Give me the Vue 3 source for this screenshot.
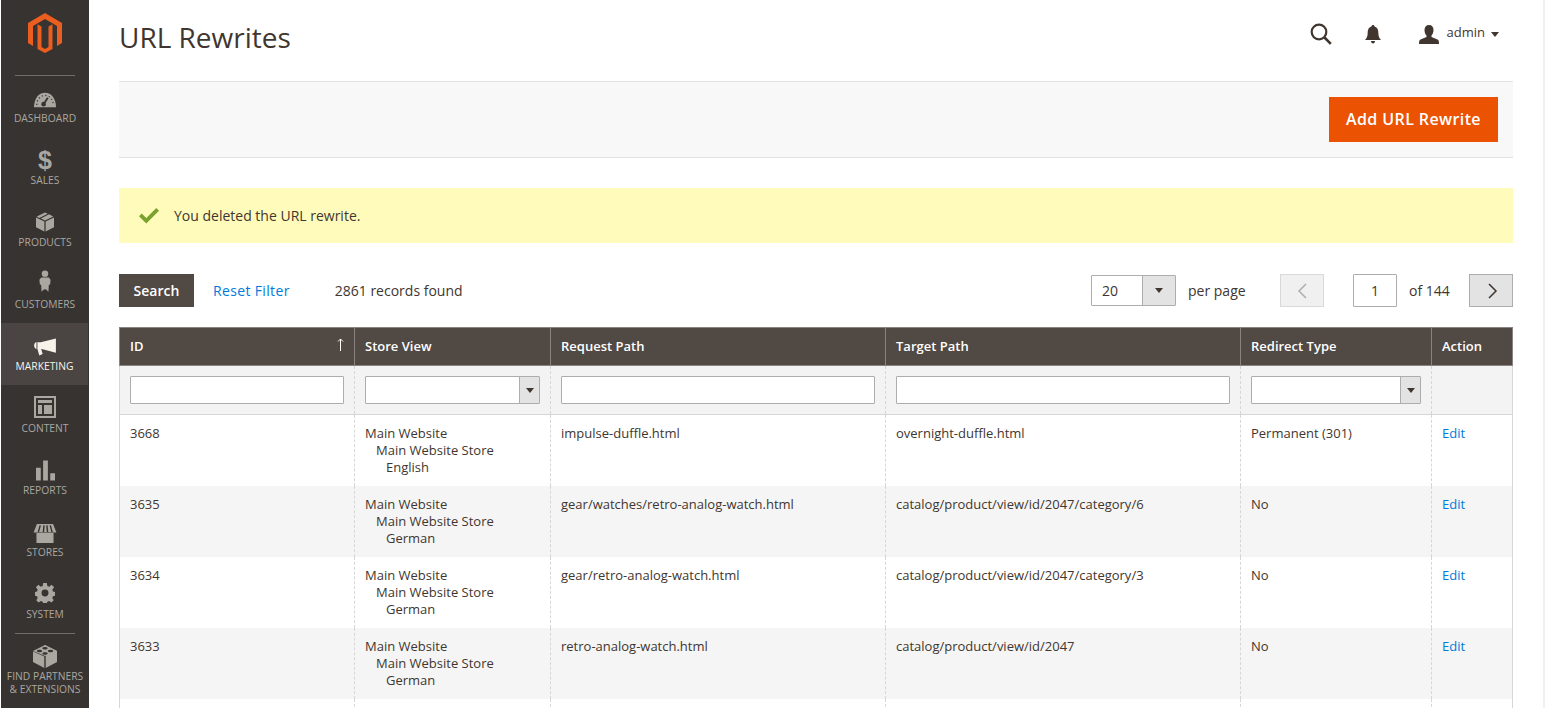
<script setup>
const navItems = [
  { key: 'dashboard', label: 'DASHBOARD' },
  { key: 'sales', label: 'SALES' },
  { key: 'products', label: 'PRODUCTS' },
  { key: 'customers', label: 'CUSTOMERS' },
  { key: 'marketing', label: 'MARKETING', active: true },
  { key: 'content', label: 'CONTENT' },
  { key: 'reports', label: 'REPORTS' },
  { key: 'stores', label: 'STORES' },
  { key: 'system', label: 'SYSTEM' },
];

const rows = [
  { id: 3668, store: 'English', request: 'impulse-duffle.html', target: 'overnight-duffle.html', type: 'Permanent (301)' },
  { id: 3635, store: 'German', request: 'gear/watches/retro-analog-watch.html', target: 'catalog/product/view/id/2047/category/6', type: 'No' },
  { id: 3634, store: 'German', request: 'gear/retro-analog-watch.html', target: 'catalog/product/view/id/2047/category/3', type: 'No' },
  { id: 3633, store: 'German', request: 'retro-analog-watch.html', target: 'catalog/product/view/id/2047', type: 'No' },
];
</script>

<template>
  <div class="page">
    <aside class="nav">
      <div class="logo">
        <svg width="36" height="40" viewBox="0 0 36 40">
          <path fill="#eb5e1f" d="M18 0 35 10v20l-5 3V13L18 6 6 13v20l-5-3V10z" />
          <path fill="#eb5e1f" d="M14.500 13.500v20.500l3.500 2 3.500-2V13.500l4-2.300V36l-7.500 4-7.500-4V11.200z" />
        </svg>
      </div>
      <ul class="nav-list">
        <li v-for="item in navItems" :key="item.key" class="nav-item" :class="[item.key, { active: item.active }]">
          <span class="nav-icon">
            <svg v-if="item.key === 'dashboard'" width="22" height="16" viewBox="0 0 24 17">
              <path fill="currentColor" d="M0 16.500C0 7 5 .5 12 .5S24 7 24 16.500z" />
              <path stroke="#373330" stroke-width="2" d="M10 14 15 6" />
              <circle cx="10.500" cy="13" r="2.500" fill="#373330" />
              <path stroke="#373330" stroke-width="1.300" stroke-dasharray="1.300 2.600" fill="none" d="M3 14C3 8 7 3.500 12 3.500S21 8 21 14" />
            </svg>
            <span v-else-if="item.key === 'sales'" class="dollar">$</span>
            <svg v-else-if="item.key === 'products'" width="18" height="20" viewBox="0 0 20 21">
              <path fill="currentColor" d="M0 5.500 9.300 10v11L0 16.300zM20 5.500 10.700 10v11l9.300-4.700zM10 0l3 1.400-9.200 4.700L.8 4.500zM14.500 2l4.700 2.500-9.200 4.400-4.600-2.200z" />
            </svg>
            <svg v-else-if="item.key === 'customers'" width="12" height="24" viewBox="0 0 14 25">
              <circle cx="7" cy="4" r="3.800" fill="currentColor" />
              <path fill="currentColor" d="M2.500 8.500h9L13.500 11 13 16.500l-1.500.5-.5 8-3-3-1 .5-1-.5-3 3-.5-8L1 16.500.5 11z" />
            </svg>
            <svg v-else-if="item.key === 'marketing'" width="22" height="18" viewBox="0 0 23 19">
              <path fill="currentColor" d="M23 .5V15.500L8 11.500H7.500L9 17l-3.500 1.500L3.500 11.500H2.500C1 11.500 0 10 0 8s1-3.500 2.500-3.500H7z" />
              <path stroke="#4a4542" stroke-width="1" d="M3 4.500v7" />
            </svg>
            <svg v-else-if="item.key === 'content'" width="22" height="22" viewBox="0 0 22 22">
              <path fill="currentColor" fill-rule="evenodd" d="M0 0h22v22H0zM2 2v18h18V2zM4 4h14v3H4zM4 9h4v9H4zM10 9h8v9h-8z" />
            </svg>
            <svg v-else-if="item.key === 'reports'" width="19" height="21" viewBox="0 0 20 21">
              <path fill="currentColor" d="M0 7.500h5V21H0zM7.500 0h5v21h-5zM15 13.500h5V21h-5z" />
            </svg>
            <svg v-else-if="item.key === 'stores'" width="24" height="19" viewBox="0 0 24 20">
              <path fill="currentColor" d="M3 9.500h18V20H3zM3.500 0h17l3.500 9H0z" />
              <path stroke="#373330" stroke-width="1.500" fill="none" d="M7 1.500 5 8.500M11 1.500 10.300 8.500M14 1.500l.7 7M17.500 1.500l2 7" />
            </svg>
            <svg v-else-if="item.key === 'system'" width="22" height="20" viewBox="0 0 22 22">
              <path fill="currentColor" fill-rule="evenodd" d="M9 0h4l.6 3.200 2 .8L18.300 2 21 4.800 19 7.400l.8 2 2.200.6v4l-2.200.6-.8 2 1.600 2.400L18 21.500l-2.400-1.600-2 .8L13 22H9l-.6-1.300-2-.8L4 21.500 1.400 19 3 16.600l-.8-2L0 14v-4l2.200-.6.8-2-2-2.600L3.700 2l2.700 2 2-.8zM11 7.200a3.800 3.800 0 1 0 0 7.600 3.800 3.800 0 0 0 0-7.600z" />
            </svg>
          </span>
          <span class="nav-label">{{ item.label }}</span>
        </li>
      </ul>
      <div class="nav-extra">
        <svg width="24" height="23" viewBox="0 0 24 23">
          <path fill="currentColor" d="M12 0 24 6v11l-11.300 6V11.500zM0 6.500l11.300 5V23L0 17z" />
          <path fill="currentColor" d="M12 0 24 6l-12 5L0 6z" />
          <ellipse cx="12" cy="3.300" rx="2.700" ry="1.300" fill="#373330" />
          <ellipse cx="6.500" cy="6" rx="2.700" ry="1.300" fill="#373330" />
          <ellipse cx="17.500" cy="6" rx="2.700" ry="1.300" fill="#373330" />
          <ellipse cx="12" cy="8.500" rx="2.700" ry="1.300" fill="#373330" />
        </svg>
        <span class="nav-label">FIND PARTNERS<br />&amp; EXTENSIONS</span>
      </div>
    </aside>

    <main class="main">
      <header class="top">
        <h1 class="title">URL Rewrites</h1>
        <div class="tools">
          <svg class="tool-search" width="22" height="22" viewBox="0 0 22 22">
            <circle cx="9" cy="9" r="7.300" fill="none" stroke="#41362f" stroke-width="2.200" />
            <path stroke="#41362f" stroke-width="2.600" d="m14.500 14.500 6.300 6.300" />
          </svg>
          <svg class="tool-bell" width="16" height="19" viewBox="0 0 16 19">
            <path fill="#41362f" d="M8 0c1 0 1.500.6 1.500 1.500C12 2.300 13.300 4.500 13.300 7c0 4 .7 5.800 2.700 8H0c2-2.200 2.700-4 2.700-8 0-2.500 1.300-4.700 3.800-5.500C6.500.6 7 0 8 0z" />
            <path fill="#41362f" d="M6 16h4c0 1.500-.8 2.500-2 2.500S6 17.500 6 16z" />
          </svg>
          <div class="user">
            <svg width="20" height="19" viewBox="0 0 20 19">
              <path fill="#41362f" d="M10 0c3 0 4.500 2 4.500 5 0 2.300-.8 4.300-2 5.500v1.500l6 2.500c1 .5 1.500 1.500 1.500 4.500H0c0-3 .5-4 1.500-4.500l6-2.500v-1.500C6.300 9.300 5.500 7.300 5.500 5c0-3 1.500-5 4.500-5z" />
            </svg>
            <span class="user-name">admin</span>
            <span class="caret"></span>
          </div>
        </div>
      </header>

      <div class="actions">
        <button class="primary">Add URL Rewrite</button>
      </div>

      <div class="message">
        <svg width="20" height="16" viewBox="0 0 20 16">
          <path fill="#79a22e" d="M0 8.300 2.700 5.600 7.300 10 17.300 0 20 2.700 7.300 15.500z" />
        </svg>
        <span>You deleted the URL rewrite.</span>
      </div>

      <div class="toolbar">
        <button class="search">Search</button>
        <a class="reset">Reset Filter</a>
        <span class="found">2861 records found</span>
        <div class="pager">
          <div class="per-select">
            <span class="per-value">20</span>
            <span class="select-btn"><i class="arrow"></i></span>
          </div>
          <span class="per-label">per page</span>
          <button class="page-btn prev">
            <svg width="10" height="16" viewBox="0 0 10 16"><path fill="none" stroke="currentColor" stroke-width="1.500" d="M9 1 2 8l7 7" /></svg>
          </button>
          <span class="page-input">1</span>
          <span class="page-of">of 144</span>
          <button class="page-btn next">
            <svg width="10" height="16" viewBox="0 0 10 16"><path fill="none" stroke="currentColor" stroke-width="1.500" d="m1 1 7 7-7 7" /></svg>
          </button>
        </div>
      </div>

      <table class="grid">
        <colgroup>
          <col style="width: 235px" />
          <col style="width: 196px" />
          <col style="width: 335px" />
          <col style="width: 355px" />
          <col style="width: 191px" />
          <col style="width: 81px" />
        </colgroup>
        <thead>
          <tr>
            <th>
              ID
              <svg class="sort-arrow" width="7" height="13" viewBox="0 0 7 13">
                <path fill="none" stroke="#fff" stroke-width="1" d="M3.500 13V1M1 3.500 3.500 1 6 3.500" />
              </svg>
            </th>
            <th>Store View</th>
            <th>Request Path</th>
            <th>Target Path</th>
            <th>Redirect Type</th>
            <th>Action</th>
          </tr>
        </thead>
        <tbody>
          <tr class="filters">
            <td><span class="field"></span></td>
            <td><span class="field with-select"><span class="select-btn"><i class="arrow"></i></span></span></td>
            <td><span class="field"></span></td>
            <td><span class="field"></span></td>
            <td><span class="field with-select"><span class="select-btn"><i class="arrow"></i></span></span></td>
            <td></td>
          </tr>
          <tr v-for="row in rows" :key="row.id" class="row">
            <td>{{ row.id }}</td>
            <td>
              Main Website
              <div class="indent">Main Website Store</div>
              <div class="indent-2">{{ row.store }}</div>
            </td>
            <td>{{ row.request }}</td>
            <td>{{ row.target }}</td>
            <td>{{ row.type }}</td>
            <td><a class="edit">Edit</a></td>
          </tr>
          <!-- next row starts just above the fold, only its borders show -->
          <tr class="row">
            <td v-for="n in 6" :key="n"></td>
          </tr>
        </tbody>
      </table>
    </main>
  </div>
</template>

<style>
html,
body {
  margin: 0;
  height: 100%;
  overflow: hidden;
  background: #fff;
}
</style>

<style scoped>
.page {
  display: flex;
  height: 708px;
  overflow: hidden;
  font-family: "Open Sans", sans-serif;
  font-size: 14px;
  color: #41362f;
  background: #fff;
  border-right: 2px solid #f0f0f0;
  box-sizing: border-box;
}

.nav {
  flex: none;
  width: 88px;
  margin-left: 1px;
  background: #373330;
  color: #aaa6a0;
  display: flex;
  flex-direction: column;
}

.logo {
  height: 75px;
  display: flex;
  justify-content: center;
  padding-top: 13px;
  box-sizing: border-box;
  position: relative;
}

.logo::after,
.nav-extra::before {
  content: '';
  position: absolute;
  left: 14px;
  right: 14px;
  height: 1px;
  background: #736e69;
}

.logo::after {
  bottom: -1px;
}

.nav-list {
  list-style: none;
  margin: 0;
  padding: 0;
}

.nav-item {
  height: 62px;
  display: flex;
  flex-direction: column;
  align-items: center;
  justify-content: flex-end;
  box-sizing: border-box;
  padding-bottom: 12px;
}

.nav-item.active {
  margin-right: 1px;
  background: #4a4542;
  color: #f7f3eb;
}

.nav-icon {
  height: 26px;
  display: flex;
  align-items: flex-end;
  justify-content: center;
  margin-bottom: 4px;
}

.customers .nav-icon,
.system .nav-icon {
  margin-bottom: 5px;
}

.reports .nav-icon,
.stores .nav-icon {
  margin-bottom: 3px;
}

.sales .nav-icon {
  margin-bottom: 2px;
}

.dollar {
  font-family: "Liberation Sans", sans-serif;
  font-size: 25px;
  font-weight: 700;
  line-height: 24px;
}

.nav-label {
  font-size: 10.300px;
  line-height: 13px;
  text-align: center;
  white-space: nowrap;
}

.nav-extra {
  position: relative;
  display: flex;
  flex-direction: column;
  align-items: center;
  padding-top: 12px;
  gap: 2px;
}

.nav-extra::before {
  top: 0;
}

.main {
  flex: 1;
  min-width: 0;
  padding: 0 30px;
}

.top {
  height: 81px;
  display: flex;
  align-items: flex-start;
  justify-content: space-between;
  border-bottom: 1px solid #e3e3e3;
  box-sizing: content-box;
}

.title {
  margin: 17px 0 0;
  font-size: 28px;
  font-weight: 400;
  line-height: 40px;
  color: #41362f;
}

.tools {
  display: flex;
  align-items: center;
  padding-top: 23px;
  margin-right: 14px;
}

.tool-search {
  margin-right: 33px;
}

.tool-bell {
  margin-right: 38px;
}

.user {
  display: flex;
  align-items: center;
}

.user-name {
  margin-left: 8px;
  margin-top: -4px;
  font-size: 13px;
  color: #41362f;
}

.caret {
  margin-left: 6px;
  margin-top: 0;
  border: 4px solid transparent;
  border-top: 5px solid #41362f;
  border-bottom: 0;
}

.actions {
  height: 75px;
  background: #f8f8f8;
  border-bottom: 1px solid #e3e3e3;
  display: flex;
  align-items: center;
  justify-content: flex-end;
  padding-right: 15px;
}

.primary {
  width: 169px;
  height: 45px;
  border: 0;
  background: #eb5202;
  color: #fff;
  font-family: inherit;
  font-size: 16px;
  font-weight: 600;
  letter-spacing: 0.4px;
  padding: 0 0 2px;
}

.message {
  margin-top: 30px;
  height: 55px;
  background: #fffbbb;
  display: flex;
  align-items: center;
  padding-left: 20px;
  gap: 15px;
  color: #41362f;
}

.toolbar {
  margin-top: 31px;
  display: flex;
  align-items: center;
  height: 33px;
}

.search {
  width: 75px;
  height: 33px;
  border: 0;
  background: #514943;
  color: #fff;
  font-family: inherit;
  font-size: 14px;
  font-weight: 600;
  padding: 0;
}

.reset {
  margin-left: 19px;
  color: #007bdb;
  letter-spacing: 0.35px;
}

.found {
  margin-left: 45px;
  color: #41362f;
}

.pager {
  margin-left: auto;
  display: flex;
  align-items: center;
}

.per-select {
  width: 83px;
  height: 29px;
  border: 1px solid #adadad;
  border-radius: 1px;
  display: flex;
  background: #fff;
}

.per-value {
  flex: 1;
  padding-left: 10px;
  line-height: 30px;
}

.select-btn {
  width: 32px;
  height: 100%;
  background: #e3e3e3;
  border-left: 1px solid #adadad;
  display: flex;
  align-items: center;
  justify-content: center;
  flex: none;
}

.arrow {
  border: 4px solid transparent;
  border-top: 5px solid #41362f;
  border-bottom: 0;
}

.per-label {
  margin-left: 12px;
  width: 92px;
}

.page-btn {
  width: 44px;
  height: 33px;
  padding: 0;
  box-sizing: border-box;
  display: flex;
  align-items: center;
  justify-content: center;
  font-family: inherit;
}

.prev {
  background: #f0f0f0;
  border: 1px solid #d9d9d9;
  color: #adadad;
}

.next {
  background: #e3e3e3;
  border: 1px solid #adadad;
  color: #41362f;
  padding-left: 3px;
}

.page-input {
  margin-left: 29px;
  width: 44px;
  height: 33px;
  box-sizing: border-box;
  border: 1px solid #adadad;
  border-radius: 1px;
  text-align: center;
  line-height: 31px;
}

.page-of {
  margin-left: 12px;
  width: 60px;
}

.grid {
  margin-top: 20px;
  width: 1393px;
  table-layout: fixed;
  border-collapse: collapse;
}

th {
  height: 38px;
  padding: 0 10px 1px;
  background: #514943;
  color: #fff;
  font-weight: 600;
  font-size: 13px;
  text-align: left;
  border: 1px solid #8a837f;
  border-bottom-color: #8a837f;
  box-sizing: border-box;
  position: relative;
}

.sort-arrow {
  position: absolute;
  right: 10px;
  top: 10px;
}

td {
  padding: 10px;
  vertical-align: top;
  border-left: 1px dashed #d6d6d6;
  border-right: 1px dashed #d6d6d6;
  line-height: 17px;
  font-size: 13px;
  color: #41362f;
}

td:first-child {
  border-left: 1px solid #d6d6d6;
}

td:last-child {
  border-right: 1px solid #d6d6d6;
}

.filters td {
  height: 48px;
  box-sizing: border-box;
  background: #f3f3f3;
  border-bottom: 1px solid #d6d6d6;
  padding: 10px;
}

.field {
  display: flex;
  justify-content: flex-end;
  height: 28px;
  box-sizing: border-box;
  border: 1px solid #adadad;
  border-radius: 1px;
  background: #fff;
}

.with-select .select-btn {
  width: 19px;
}

.row td {
  height: 71px;
  box-sizing: border-box;
}

.row:nth-child(odd) td {
  background: #f5f5f5;
}

.indent {
  padding-left: 11px;
}

.indent-2 {
  padding-left: 21px;
}

.edit {
  color: #007bdb;
}
</style>
